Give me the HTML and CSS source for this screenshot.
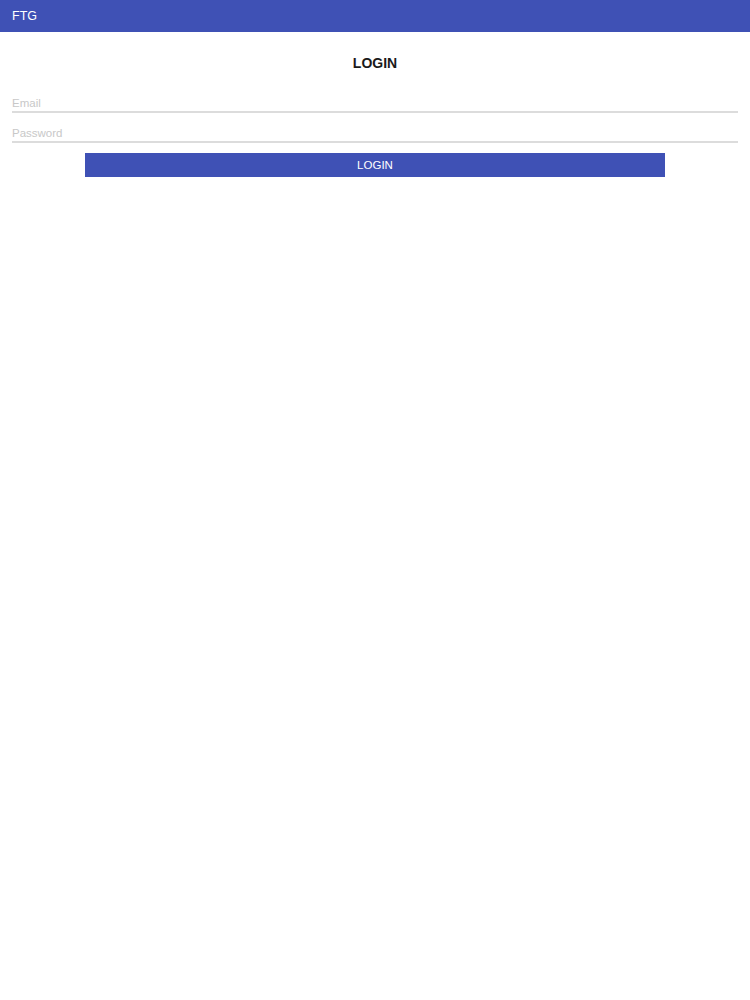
FILE: index.html
```html
<!DOCTYPE html>
<html>
<head>
<meta charset="utf-8">
<title>FTG</title>
<link rel="stylesheet" href="styles.css">
</head>
<body>
<header class="app-bar"><span class="app-title">FTG</span></header>
<main class="content">
  <h1 class="page-title">LOGIN</h1>
  <form class="login-form">
    <input class="field" type="email" placeholder="Email">
    <input class="field" type="password" placeholder="Password">
    <button class="login-btn" type="button">LOGIN</button>
  </form>
</main>
</body>
</html>
```
FILE: styles.css
```css
html, body {
  margin: 0;
  padding: 0;
  background: #ffffff;
  font-family: "Liberation Sans", Arial, sans-serif;
}
.app-bar {
  height: 32px;
  background: #3f51b5;
  display: flex;
  align-items: center;
  padding-left: 12px;
}
.app-title {
  color: #ffffff;
  font-size: 12.5px;
  line-height: 32px;
}
.content {
  padding: 0 12px;
}
.page-title {
  margin: 23px 0 0;
  text-align: center;
  font-size: 14px;
  line-height: 16px;
  font-weight: bold;
  color: #1a1a1a;
}
.login-form {
  display: flex;
  flex-direction: column;
  margin-top: 12px;
}
.field {
  box-sizing: content-box;
  border: none;
  border-bottom: 2px solid #dcdcdc;
  outline: none;
  padding: 14px 0 1px;
  margin: 0;
  height: 13px;
  line-height: 13px;
  font-family: inherit;
  font-size: 11.5px;
  color: #333;
  background: transparent;
}
.field::placeholder {
  color: #c8c8c8;
}
.login-btn {
  align-self: center;
  width: 80%;
  height: 24px;
  margin-top: 10px;
  border: none;
  background: #3f51b5;
  color: #ffffff;
  font-family: inherit;
  font-size: 11.5px;
  padding: 0;
}
```
